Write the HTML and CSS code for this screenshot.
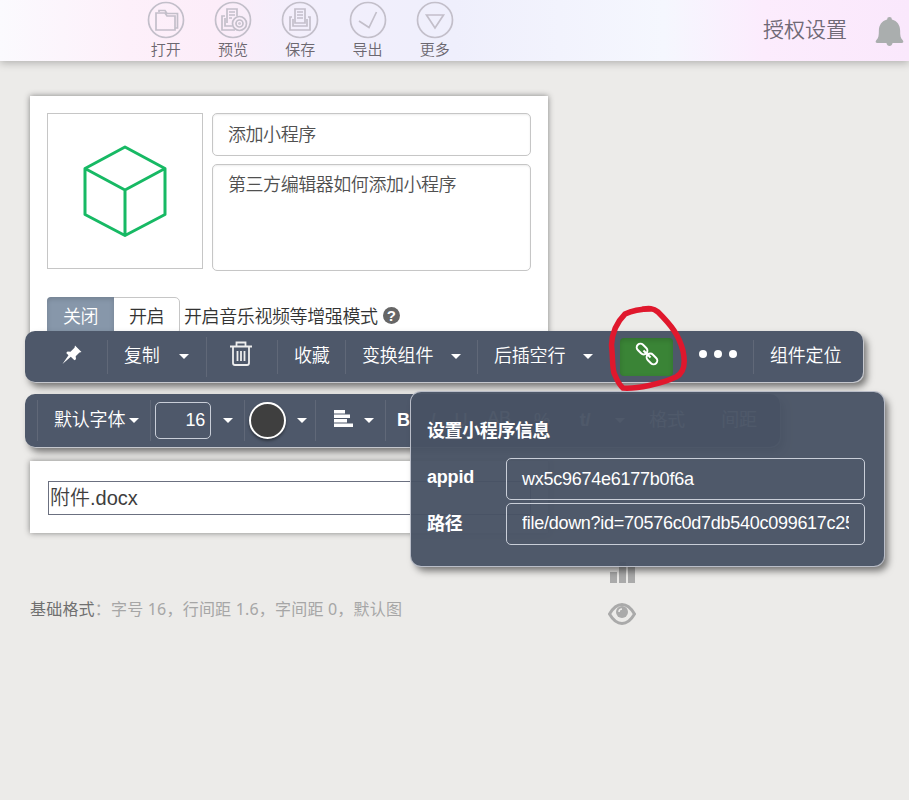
FILE: index.html
```
<!DOCTYPE html>
<html lang="zh-CN">
<head>
  <meta charset="UTF-8" />
  <meta name="viewport" content="width=device-width, initial-scale=1.0" />
  <title>编辑器</title>
  <link rel="stylesheet" href="styles.css">
</head>
<body>
  <header class="topbar">
    <nav class="actions">
      <a class="action">
        <svg viewBox="0 0 38 38"><circle cx="19" cy="19" r="17.5"/><path d="M9 12v17h19V15H20l-2-3H9zM12 11v-1.500h6l2 3h10.500v14.500H28"/></svg>
        <span>打开</span>
      </a>
      <a class="action">
        <svg viewBox="0 0 38 38"><circle cx="19" cy="19" r="17.5"/><path d="M11 15H8v14h13M13 22V8h10v7M15 11h6M15 14h6M15 17h3M11 17v8h7"/><circle cx="25.500" cy="22.500" r="7"/><circle cx="25.500" cy="22.500" r="3.500"/><circle cx="25.500" cy="22.500" r=".5"/></svg>
        <span>预览</span>
      </a>
      <a class="action">
        <svg viewBox="0 0 38 38"><circle cx="19" cy="19" r="17.5"/><path d="M14 8h10v14H14zM16 11h6M16 14h6M16 17h6M11 16H9v13h20V16h-2M12 18v7h14v-7"/></svg>
        <span>保存</span>
      </a>
      <a class="action">
        <svg viewBox="0 0 38 38"><circle cx="19" cy="19" r="17.5"/><path d="M10 20l10 6.500L27.500 11"/></svg>
        <span>导出</span>
      </a>
      <a class="action">
        <svg viewBox="0 0 38 38"><circle cx="19" cy="19" r="17.5"/><path d="M10.500 14h17L19 27z"/></svg>
        <span>更多</span>
      </a>
    </nav>
    <div class="account">
      <span>授权设置</span>
      <svg class="bell" viewBox="0 0 30 32"><path d="M15 1a2.500 2.500 0 0 1 2.500 2.500C23 5 26 9.500 26 15c0 5 .3 8 2.700 10 1.200 1.200.6 3-1.200 3h-9.300c-.5 2-1.500 3-3.200 3s-2.700-1-3.200-3H2.500c-1.800 0-2.400-1.800-1.200-3C3.700 23 4 20 4 15 4 9.500 7 5 12.500 3.500A2.500 2.500 0 0 1 15 1z"/></svg>
    </div>
  </header>

  <main class="editor">
    <section class="card article">
      <div class="article-info">
        <div class="cover">
          <svg viewBox="0 0 84 92"><path d="M42 2l40 21.500v46L42 90.500 2 69.500v-46zM2 23.500L42 45l40-21.500M42 45v45"/></svg>
        </div>
        <div class="fields">
          <div class="field">添加小程序</div>
          <div class="field summary">第三方编辑器如何添加小程序</div>
        </div>
      </div>
      <div class="mode">
        <div class="switch"><span class="on">关闭</span><span>开启</span></div>
        <span class="mode-label">开启音乐视频等增强模式</span>
        <span class="help">?</span>
      </div>
    </section>

    <div class="toolbar main-tools">
      <div class="tool pin">
        <svg viewBox="0 0 20 20"><path d="M13 0.500L19.500 7l-2 .6-3.800 3.600.3 3-1.600 1-3.600-3.400L.5 19 6.500 10.300 4.200 8l1.300-1.500 3 .2 4-4z"/></svg>
      </div>
      <div class="tool copy"><span>复制</span><i class="caret"></i></div>
      <div class="tool trash">
        <svg viewBox="0 0 22 25"><path d="M0 5.500h22M6.500 5V1.500h9V5M3 6v16q0 2 2 2h12q2 0 2-2V6M7.500 10v10M11 10v10M14.500 10v10"/></svg>
      </div>
      <div class="tool fav"><span>收藏</span></div>
      <div class="tool swap"><span>变换组件</span><i class="caret"></i></div>
      <div class="tool blank"><span>后插空行</span><i class="caret"></i></div>
      <div class="tool link">
        <svg viewBox="0 0 22 22"><g transform="rotate(45 11 11)"><rect x="-2" y="7.300" width="12" height="7.400" rx="3.700"/><rect x="12" y="7.300" width="12" height="7.400" rx="3.700"/><path d="M6 11h10"/></g></svg>
      </div>
      <div class="dots"><i></i><i></i><i></i></div>
      <div class="tool locate"><span>组件定位</span></div>
    </div>

    <div class="toolbar text-tools">
      <div class="tool font"><span>默认字体</span><i class="caret"></i></div>
      <div class="tool size"><div class="size-input">16</div><i class="caret"></i></div>
      <div class="tool color"><div class="swatch"></div><i class="caret"></i></div>
      <div class="tool align">
        <svg viewBox="0 0 19 17"><path d="M0 0h11v3.500H0zM0 4.500h16v3.500H0zM0 9h13v3.500H0zM0 13.500h19V17H0z"/></svg>
        <i class="caret"></i>
      </div>
      <div class="tool marks">
        <b>B</b><em>I</em><u>U</u><span>AB</span><s>%</s><strong>t/</strong><i class="caret"></i><span>格式</span><span>间距</span>
      </div>
    </div>

    <section class="card attachment">
      <div class="file">附件.docx</div>
    </section>

    <div class="status">
      <p><span>基础格式</span>：字号 16，行间距 1.6，字间距 0，默认图</p>
      <div class="side">
        <svg class="chart" viewBox="0 0 25 21"><path d="M0 10h7v11H0zM9 0h7v21H9zM18 4h7v17h-7z"/></svg>
        <svg class="eye" viewBox="0 0 28 22"><path class="lid" d="M1.500 11Q7 1.500 14 1.500T26.500 11Q21 20.500 14 20.500T1.500 11z"/><circle cx="14" cy="9" r="6"/><path class="glint" d="M11 9q0-3 3-3"/></svg>
      </div>
    </div>

    <div class="popup">
      <h4>设置小程序信息</h4>
      <div class="row"><label>appid</label><div class="value">wx5c9674e6177b0f6a</div></div>
      <div class="row path"><label>路径</label><div class="value"><span>file/down?id=70576c0d7db540c099617c25</span></div></div>
    </div>

    <!-- hand drawn ring around the link button -->
    <svg class="ring" viewBox="0 0 84 92"><path d="M46 6C35 6 28 7 20 11C11 20 7 30 6.500 42C8 56 7 62 9 70C12 76 13 81 18 85C32 86 56 81 71 74C79 70 81 62 78 48C74 32 66 22 53 9C48 5 44 5 38 6"/></svg>
  </main>
</body>
</html>
```
FILE: styles.css
```
* {
  box-sizing: border-box;
}
body {
  margin: 0;
  height: 800px;
  overflow: hidden;
  background: #ecebe9;
  color: #505050;
  font-family: "Liberation Sans", "Noto Sans CJK SC", sans-serif;
  font-size: 18px;
  font-weight: 350;
}
b, strong {
  font-weight: 700;
}
.topbar {
  display: flex;
  justify-content: space-between;
  height: 61px;
  padding-left: 132px;
  background: linear-gradient(90deg, #fbfafe 0, #fdf0fa 14%, #fcedf9 24%, #f3effc 33%, #efeffc 50%, #f5f7fe 73%, #fcecfd 84%, #fae8fc 100%);
  box-shadow: 0 2px 8px rgba(0, 0, 0, 0.25);
}
.actions {
  display: flex;
}
.action {
  display: flex;
  flex-direction: column;
  align-items: center;
  width: 67.3px;
  padding-top: 1px;
  font-size: 15px;
  line-height: 21px;
  color: #6c6870;
}
.action svg {
  width: 38px;
  height: 38px;
  fill: none;
  stroke: #c3bfca;
  stroke-width: 1.7;
}
.account {
  display: flex;
  align-items: center;
  gap: 28px;
  padding-right: 5px;
  font-size: 21px;
  color: #6f6976;
}
.account span {
  margin-bottom: 5px;
}
.bell {
  width: 29px;
  height: 33px;
  margin-top: 2px;
  fill: #aaaeae;
}
.editor {
  position: relative;
  padding: 35px 30px 0;
}
.card {
  width: 518px;
  background: #fff;
  box-shadow: 0 0 6px rgba(0, 0, 0, 0.45);
}
.article {
  height: 250px;
  padding: 17px;
}
.article-info {
  display: flex;
  gap: 9px;
}
.cover {
  display: flex;
  align-items: center;
  justify-content: center;
  width: 156px;
  height: 156px;
  border: 1px solid #c6c6c6;
}
.cover svg {
  width: 84px;
  height: 92px;
  fill: none;
  stroke: #17b964;
  stroke-width: 3;
  stroke-linejoin: round;
}
.fields {
  display: flex;
  flex-direction: column;
  gap: 8px;
}
.field {
  width: 319px;
  height: 43px;
  padding: 0 15px;
  border: 1px solid #c6c6c6;
  border-radius: 5px;
  box-shadow: inset 0 1px 2px rgba(0, 0, 0, 0.08);
  line-height: 43px;
  letter-spacing: -0.45px;
}
.summary {
  height: 107px;
  line-height: 41px;
}
.mode {
  display: flex;
  align-items: center;
  height: 38px;
  margin-top: 26px;
  letter-spacing: -0.4px;
  color: #333;
}
.switch {
  display: flex;
  border: 1px solid #c6c6c6;
  border-radius: 5px;
  line-height: 38px;
  height: 38px;
  margin-right: 4px;
}
.switch span {
  width: 65px;
  text-align: center;
}
.switch .on {
  width: 67px;
  margin: -1px 0 0 -1px;
  line-height: 40px;
  border-radius: 4px 0 0 4px;
  background: #8797aa;
  box-shadow: inset 0 2px 5px rgba(0, 0, 0, 0.15);
  color: #fff;
}
.mode-label {
  margin-bottom: 2px;
}
.help {
  width: 17px;
  height: 17px;
  margin: 0 0 2px 5px;
  border-radius: 50%;
  background: #666;
  color: #fff;
  font-size: 15px;
  font-weight: bold;
  line-height: 17px;
  text-align: center;
}
.toolbar {
  position: relative;
  display: flex;
  align-items: center;
  margin-left: -5px;
  border-radius: 10px;
  background: #4e586a;
  box-shadow: 1px 1px 0 #c5c7cd, 4px 5px 7px rgba(0, 0, 0, 0.5);
  color: #fff;
}
.tool {
  display: flex;
  align-items: center;
  height: 34px;
  padding-left: 16px;
  border-left: 1px solid #606878;
  letter-spacing: -0.2px;
  white-space: nowrap;
}
.tool > span {
  margin-bottom: 5px;
}
.caret {
  border: 5px solid transparent;
  border-top-color: #fff;
  border-bottom: 0;
}
.main-tools {
  width: 838px;
  height: 51px;
  margin-top: -15px;
}
.pin {
  width: 82px;
  padding-left: 37px;
  border: 0;
}
.pin svg {
  width: 20px;
  height: 20px;
  margin-bottom: 4px;
  fill: #fff;
}
.copy {
  width: 99px;
}
.copy .caret {
  margin-left: 19px;
}
.swap .caret, .blank .caret {
  margin-left: 18px;
}
.trash {
  width: 71px;
  height: 40px;
  padding-left: 23px;
}
.trash svg {
  width: 22px;
  height: 25px;
  margin-bottom: 6px;
  fill: none;
  stroke: #eee;
  stroke-width: 1.8;
}
.fav {
  width: 68px;
}
.swap {
  width: 132px;
}
.blank {
  width: 143px;
}
.link {
  justify-content: center;
  width: 53px;
  height: 38px;
  padding: 0;
  border: 0;
  border-radius: 4px;
  background: #3a8436;
  box-shadow: inset 0 2px 5px rgba(0, 0, 0, 0.15);
}
.link svg {
  width: 22px;
  height: 22px;
  margin-bottom: 5px;
  overflow: visible;
  fill: none;
  stroke: #fff;
  stroke-width: 2;
}
.dots {
  display: flex;
  gap: 7px;
  width: 80px;
  padding: 0 0 5px 26px;
}
.dots i {
  width: 8px;
  height: 8px;
  border-radius: 50%;
  background: #fff;
}
.text-tools {
  width: 755px;
  height: 53px;
  margin-top: 12px;
  padding-left: 12px;
}
.text-tools .tool {
  height: 41px;
}
.text-tools .font {
  width: 113px;
}
.font .caret {
  margin-left: 4px;
}
.size {
  width: 94px;
  padding-left: 4px;
}
.size-input {
  width: 56px;
  height: 37px;
  padding-right: 5px;
  border: 1px solid #c9ced8;
  border-radius: 5px;
  line-height: 34px;
  text-align: right;
}
.size .caret {
  margin-left: 12px;
}
.color {
  width: 71px;
  padding-left: 4px;
}
.swatch {
  width: 37px;
  height: 37px;
  border: 2px solid #fff;
  border-radius: 50%;
  background: #3f3f3f;
  box-shadow: 0 2px 3px rgba(0, 0, 0, 0.4);
}
.color .caret {
  margin-left: 11px;
}
.align {
  width: 70px;
  padding-left: 18px;
}
.align svg {
  width: 19px;
  height: 17px;
  margin-bottom: 5px;
  fill: #fff;
}
.align .caret {
  margin-left: 11px;
}
.marks {
  display: grid;
  grid-template-columns: 22px 28px 28px 48px 38px 48px 22px 72px 72px;
  justify-items: center;
  padding-left: 11px;
}
.marks b {
  justify-self: start;
}
.attachment {
  height: 72px;
  margin-top: 14px;
  padding: 20px 17px 0 18px;
}
.file {
  height: 34px;
  padding-left: 1px;
  border: 1px solid #6b7080;
  font-size: 20px;
  line-height: 32px;
  color: #3e3e3e;
}
.status {
  display: flex;
  font-family: "Noto Sans", "Noto Sans CJK SC", sans-serif;
  font-size: 16px;
  font-weight: 400;
  color: #a6a6a6;
}
.status p {
  width: 578px;
  margin: 64px 0 0;
  line-height: 24px;
  letter-spacing: 0.2px;
}
.status p span {
  color: #707070;
}
.side {
  display: flex;
  flex-direction: column;
  align-items: center;
  gap: 20px;
  padding-top: 29px;
}
.side svg {
  fill: #aaa;
}
.chart {
  width: 25px;
  height: 21px;
}
.eye {
  width: 28px;
  height: 22px;
}
.eye .lid {
  fill: none;
  stroke: #aaa;
  stroke-width: 3;
}
.eye .glint {
  fill: none;
  stroke: #ecebe9;
  stroke-width: 1.5;
}
.popup {
  position: absolute;
  left: 411px;
  top: 331px;
  width: 473px;
  height: 174px;
  padding: 26px 17px 0 16px;
  border-radius: 10px;
  background: rgba(72, 82, 100, 0.96);
  box-shadow: 0 0 0 1px #b9bdc8, 4px 5px 7px rgba(0, 0, 0, 0.5);
  color: #fff;
}
.popup h4 {
  margin: 0 0 13px;
  font-size: 18px;
  line-height: 27px;
  letter-spacing: -0.4px;
}
.row {
  display: flex;
  margin-bottom: 3px;
}
.row label {
  width: 79px;
  font-weight: bold;
  line-height: 39px;
  letter-spacing: -0.2px;
}
.path label {
  line-height: 43px;
}
.value {
  width: 359px;
  height: 42px;
  padding: 0 15px;
  border: 1px solid #c9ced8;
  border-radius: 5px;
  line-height: 40px;
  letter-spacing: -0.25px;
}
.value span {
  display: block;
  overflow: hidden;
  line-height: 38px;
  letter-spacing: -0.27px;
  white-space: nowrap;
}
.ring {
  position: absolute;
  left: 605px;
  top: 242px;
  width: 84px;
  height: 92px;
  fill: none;
  stroke: #e0182d;
  stroke-width: 5.5;
  stroke-linecap: round;
}
```
